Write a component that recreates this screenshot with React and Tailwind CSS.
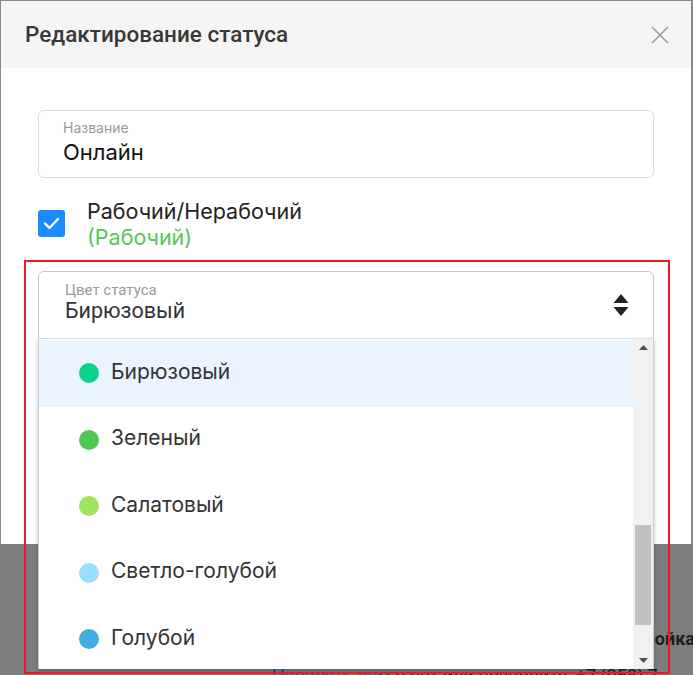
import React from 'react';

const colors = [
  { name: 'Бирюзовый', dot: 'bg-[#0bd18a]', active: true },
  { name: 'Зеленый', dot: 'bg-[#52c752]' },
  { name: 'Салатовый', dot: 'bg-[#a2e461]' },
  { name: 'Светло-голубой', dot: 'bg-[#9cdcff]' },
  { name: 'Голубой', dot: 'bg-[#41ade4]' },
];

const geo = { fontFamily: 'Inter, "Noto Sans", sans-serif' };
const rob = { fontFamily: 'Roboto, "Liberation Sans", sans-serif' };

export default function App() {
  return (
    <div className="relative w-[693px] h-[675px] overflow-hidden bg-[#7d7d7d]">
      {/* page behind the overlay */}
      <div className="absolute right-[-2px] top-[628px] text-[18px] leading-[22px] font-bold text-[#1e1e1e] whitespace-nowrap" style={rob}>Настройка</div>
      <div className="absolute left-[272px] top-[665px] text-[18px] leading-[22px] text-[#1e1e1e] whitespace-nowrap" style={rob}>
        <span className="text-[#1d4f9c] underline">Написать нам</span> в чат или позвоните: +7 (958) 7
      </div>

      {/* modal */}
      <div className="relative w-[693px] h-[544px] bg-white border-t border-l border-r-2 border-[#8a8a8a]">
        <div className="h-[67px] bg-[#f5f5f5] flex items-center justify-between pl-[24px] pr-[22px]">
          <h2 className="text-[22.5px] font-medium text-[#383838]" style={rob}>Редактирование статуса</h2>
          <svg width="18" height="18" viewBox="0 0 18 18" className="text-[#9a9a9a]">
            <path d="M1 1L17 17M17 1L1 17" stroke="currentColor" strokeWidth="1.6" />
          </svg>
        </div>

        <div className="pl-[37px] pr-[37px] pt-[42px] flex flex-col">
          <div className="h-[68px] rounded-[6px] border border-[#dcdcdc] pl-[24px] pt-[9px]" style={geo}>
            <div className="text-[14px] leading-[16px] text-[#9a9a9a]">Название</div>
            <div className="text-[22px] leading-[26px] text-[#111] mt-[3px]">Онлайн</div>
          </div>

          <div className="flex items-start mt-[20px] gap-[22px]" style={geo}>
            <div className="mt-[12px] w-[27px] h-[27px] rounded-[3px] bg-[#1a8cff] flex items-center justify-center">
              <svg width="17" height="13" viewBox="0 0 17 13">
                <path d="M2 6.5L6.5 11L15 2" fill="none" stroke="white" strokeWidth="2.4" strokeLinecap="round" strokeLinejoin="round" />
              </svg>
            </div>
            <div className="flex flex-col">
              <span className="text-[21.5px] leading-[26px] text-[#222]">Рабочий/Нерабочий</span>
              <span className="text-[21.5px] leading-[26px] text-[#55c65a]">(Рабочий)</span>
            </div>
          </div>

          <div className="mt-[21px] h-[68px] rounded-t-[6px] border border-[#c8c8c8] flex items-center justify-between pl-[26px] pr-[24px]" style={rob}>
            <div className="flex flex-col self-start pt-[10px]">
              <span className="text-[15px] leading-[16px] text-[#9a9a9a]">Цвет статуса</span>
              <span className="text-[21.5px] leading-[26px] text-[#333]">Бирюзовый</span>
            </div>
            <svg width="16" height="22" viewBox="0 0 16 22" className="text-[#222]">
              <path d="M8 0L15.5 9H0.5Z M0.5 13H15.5L8 22Z" fill="currentColor" />
            </svg>
          </div>
        </div>
      </div>

      {/* opened dropdown */}
      <div className="absolute left-[38px] top-[338px] w-[616px] h-[331px] bg-white border-t border-[#dedede] border-l border-r border-l-[#cfcfcf] border-r-[#cfcfcf] shadow-[0_2px_4px_rgba(0,0,0,0.25)] flex">
        <div className="flex-1 flex flex-col pt-[1px]" style={geo}>
          {colors.map((c) => (
            <div
              key={c.name}
              className={`h-[66.5px] shrink-0 flex items-center pl-[40px] gap-[12px] ${c.active ? 'bg-[#eaf4fe]' : ''}`}
            >
              <span className={`w-[20px] h-[20px] rounded-full ${c.dot}`} />
              <span className="text-[21px] leading-[26px] text-[#333] -mt-[3px]">{c.name}</span>
            </div>
          ))}
        </div>
        <div className="w-[20px] bg-[#f1f1f1] flex flex-col items-center justify-between py-[6px]">
          <svg width="9" height="5" viewBox="0 0 9 5"><path d="M4.5 0L9 5H0Z" fill="#505050" /></svg>
          <div className="flex-1 w-full flex flex-col justify-end pb-[33px] pt-[4px]">
            <div className="mx-[2px] h-[100px] bg-[#c1c1c1]" />
          </div>
          <svg width="9" height="5" viewBox="0 0 9 5"><path d="M0 0H9L4.5 5Z" fill="#505050" /></svg>
        </div>
      </div>

      {/* red annotation frame */}
      <div className="absolute left-[24px] top-[260px] w-[646px] h-[414px] border-2 border-[#ed1c24] pointer-events-none" />
    </div>
  );
}
